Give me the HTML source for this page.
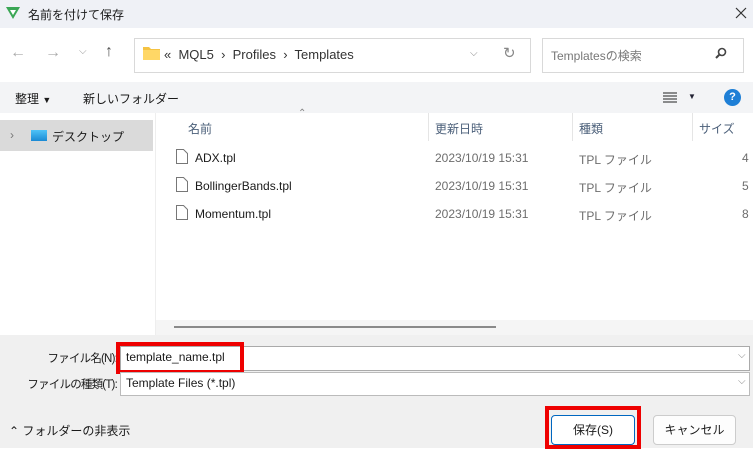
<!DOCTYPE html><html><head><meta charset="utf-8"><style>
body{margin:0;width:753px;height:448px;overflow:hidden;background:#fff;font-family:"Liberation Sans","Noto Sans CJK JP",sans-serif;font-size:12px;color:#1a1a1a;position:relative}
.a{position:absolute;white-space:nowrap}
.hd{color:#4c607a}
.g{color:#6d6d6d}
</style></head><body>
<div class="a" style="left:0;top:0;width:753px;height:28px;background:#eff1f6"></div>
<svg class="a" style="left:5px;top:6px" width="16" height="14"><path d="M1 1h14l-7 12z" fill="#3aa655"/><path d="M5 4h6l-3 5z" fill="#fff"/></svg>
<div class="a" style="left:28px;top:6px;font-size:12px">名前を付けて保存</div>
<svg class="a" style="left:735px;top:7px" width="12" height="12"><path d="M1 1L11 11M11 1L1 11" stroke="#333" stroke-width="1.2"/></svg>
<div class="a" style="left:10px;top:44px;font-size:16px;color:#aaa">←</div>
<div class="a" style="left:45px;top:44px;font-size:16px;color:#aaa">→</div>
<div class="a" style="left:79px;top:46px;font-size:10px;color:#999">⌵</div>
<div class="a" style="left:105px;top:43px;font-size:16px;color:#555">↑</div>
<div class="a" style="left:134px;top:38px;width:395px;height:33px;border:1px solid #d9d9d9;background:#fff"></div>
<svg class="a" style="left:143px;top:46px" width="17" height="14"><path d="M0 1h6l2 2h9v11H0z" fill="#f5c342"/><path d="M0 4h17v10H0z" fill="#ffd766"/></svg>
<div class="a" style="left:164px;top:47px;font-size:13px;color:#333">«&nbsp; MQL5 &nbsp;›&nbsp; Profiles &nbsp;›&nbsp; Templates</div>
<div class="a" style="left:470px;top:48px;font-size:10px;color:#888">⌵</div>
<div class="a" style="left:503px;top:44px;font-size:15px;color:#888">↻</div>
<div class="a" style="left:542px;top:38px;width:200px;height:33px;border:1px solid #d9d9d9;background:#fff"></div>
<div class="a" style="left:551px;top:47px;color:#777">Templatesの検索</div>
<svg class="a" style="left:715px;top:47px" width="12" height="12"><circle cx="7" cy="5" r="3.5" stroke="#444" stroke-width="1.6" fill="none"/><path d="M4.5 7.5L1 11" stroke="#444" stroke-width="2"/></svg>
<div class="a" style="left:0;top:82px;width:753px;height:31px;background:#f3f4f6"></div>
<div class="a" style="left:15px;top:90px">整理 <span style="font-size:9px">▼</span></div>
<div class="a" style="left:83px;top:90px">新しいフォルダー</div>
<svg class="a" style="left:663px;top:92px" width="14" height="11"><path d="M0 1h14M0 4h14M0 7h14M0 10h14" stroke="#222"/></svg>
<div class="a" style="left:688px;top:92px;font-size:8px;color:#223">▼</div>
<div class="a" style="left:724px;top:89px;width:17px;height:17px;border-radius:50%;background:#1e7fd6;color:#fff;font-weight:bold;font-size:11px;text-align:center;line-height:17px">?</div>
<div class="a" style="left:0;top:120px;width:153px;height:31px;background:#dadada"></div>
<div class="a" style="left:10px;top:128px;color:#777">›</div>
<div class="a" style="left:31px;top:130px;width:16px;height:11px;background:linear-gradient(#4fc3f7,#1a8ad4)"></div>
<div class="a" style="left:52px;top:128px">デスクトップ</div>
<div class="a" style="left:155px;top:113px;width:1px;height:222px;background:#eee"></div>
<div class="a" style="left:298px;top:108px;font-size:10px;color:#888">⌃</div>
<div class="a hd" style="left:188px;top:120px">名前</div>
<div class="a" style="left:428px;top:113px;width:1px;height:28px;background:#e5e5e5"></div>
<div class="a hd" style="left:435px;top:120px">更新日時</div>
<div class="a" style="left:572px;top:113px;width:1px;height:28px;background:#e5e5e5"></div>
<div class="a hd" style="left:579px;top:120px">種類</div>
<div class="a" style="left:692px;top:113px;width:1px;height:28px;background:#e5e5e5"></div>
<div class="a hd" style="left:699px;top:120px">サイズ</div>
<svg class="a" style="left:176px;top:149px" width="12" height="15"><path d="M.5.5h7l4 4v10h-11z" fill="#fff" stroke="#777"/></svg>
<div class="a" style="left:195px;top:151px">ADX.tpl</div>
<svg class="a" style="left:176px;top:177px" width="12" height="15"><path d="M.5.5h7l4 4v10h-11z" fill="#fff" stroke="#777"/></svg>
<div class="a" style="left:195px;top:179px">BollingerBands.tpl</div>
<svg class="a" style="left:176px;top:205px" width="12" height="15"><path d="M.5.5h7l4 4v10h-11z" fill="#fff" stroke="#777"/></svg>
<div class="a" style="left:195px;top:207px">Momentum.tpl</div>
<div class="a g" style="left:435px;top:151px">2023/10/19 15:31</div><div class="a g" style="left:579px;top:151px">TPL ファイル</div><div class="a g" style="left:742px;top:151px">4 I</div>
<div class="a g" style="left:435px;top:179px">2023/10/19 15:31</div><div class="a g" style="left:579px;top:179px">TPL ファイル</div><div class="a g" style="left:742px;top:179px">5 I</div>
<div class="a g" style="left:435px;top:207px">2023/10/19 15:31</div><div class="a g" style="left:579px;top:207px">TPL ファイル</div><div class="a g" style="left:742px;top:207px">8 I</div>
<div class="a" style="left:156px;top:320px;width:597px;height:15px;background:#f5f5f5"></div>
<div class="a" style="left:174px;top:326px;width:322px;height:2px;background:#8a8a8a"></div>
<div class="a" style="left:0;top:335px;width:753px;height:113px;background:#f0f0f0"></div>
<div class="a" style="left:0;top:350px;width:117px;text-align:right;letter-spacing:-0.8px;font-size:11.5px">ファイル名(N):</div>
<div class="a" style="left:120px;top:346px;width:628px;height:23px;border:1px solid #aaa;background:#fff"></div>
<div class="a" style="left:126px;top:350px">template_name.tpl</div>
<div class="a" style="left:738px;top:350px;font-size:10px;color:#888">⌵</div>
<div class="a" style="left:116px;top:342px;width:120px;height:24px;border:4px solid #ee0000"></div>
<div class="a" style="left:0;top:376px;width:117px;text-align:right;letter-spacing:-0.8px;font-size:11.5px">ファイルの種類(T):</div>
<div class="a" style="left:120px;top:372px;width:628px;height:22px;border:1px solid #bbb;background:#fff"></div>
<div class="a" style="left:126px;top:376px">Template Files (*.tpl)</div>
<div class="a" style="left:738px;top:376px;font-size:10px;color:#888">⌵</div>
<div class="a" style="left:9px;top:422px">⌃ フォルダーの非表示</div>
<div class="a" style="left:551px;top:415px;width:82px;height:28px;border:1px solid #0067c0;border-radius:4px;background:#fff;text-align:center;line-height:28px">保存(S)</div>
<div class="a" style="left:545px;top:406px;width:88px;height:35px;border:4px solid #ee0000"></div>
<div class="a" style="left:653px;top:415px;width:81px;height:28px;border:1px solid #ccc;border-radius:4px;background:#fdfdfd;text-align:center;line-height:28px">キャンセル</div>
</body></html>
